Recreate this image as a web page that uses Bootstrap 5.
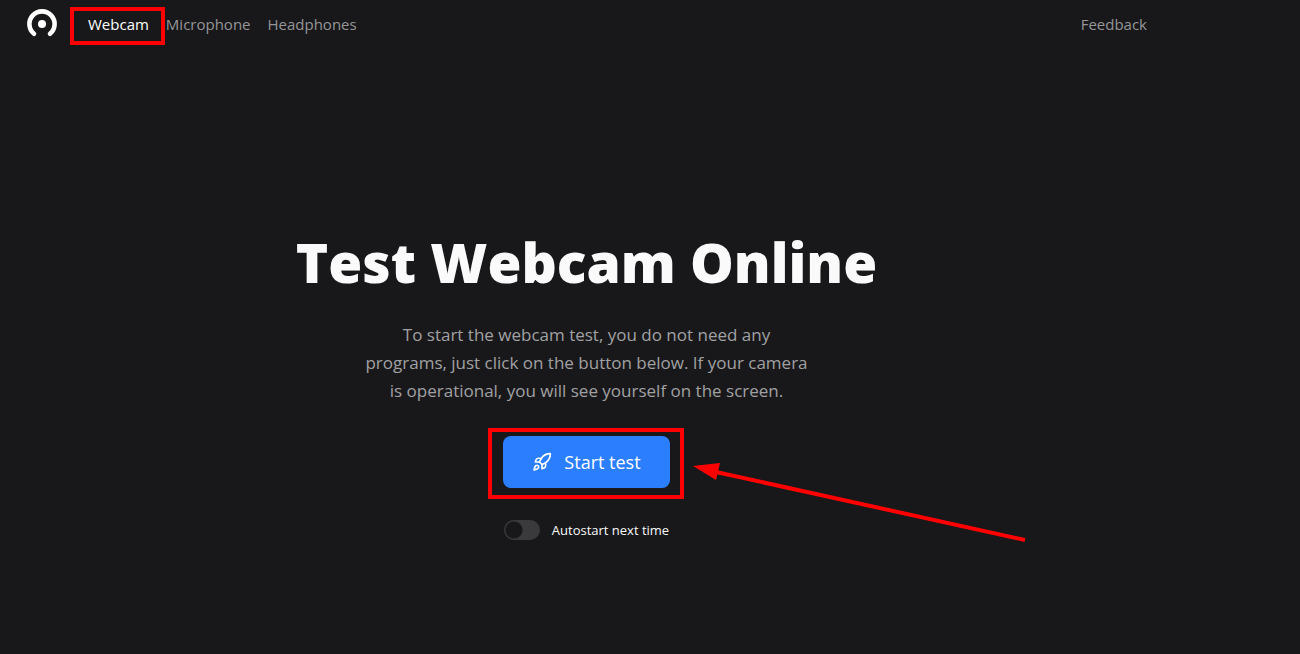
<!DOCTYPE html>
<html lang="en">
<head>
<meta charset="utf-8">
<meta name="viewport" content="width=device-width, initial-scale=1">
<title>Test Webcam Online</title>
<link href="https://cdn.jsdelivr.net/npm/bootstrap@5.3.0/dist/css/bootstrap.min.css" rel="stylesheet">
<style>
  body { background: #18181a; color: #fafafa; font-family: "Open Sans", "Noto Sans", sans-serif; }
  .page { padding-right: 127px; }
  .topbar { height: 48px; padding: 0 26px; }
  .topbar nav { gap: 17px; }
  .topbar a { color: #959597; font-size: 15px; line-height: 24px; text-decoration: none; }
  .topbar a.active, .topbar a:hover { color: #fff; }
  .brand { margin-right: 30px; }
  .marked { position: relative; }
  .marked::after { content: ""; position: absolute; border: 4px solid #f00; pointer-events: none; }
  .nav-mark::after { inset: -5px -16px -9px -18px; }
  .btn-mark::after { inset: -8px -14px -11px -15px; }
  .hero { padding: 184px 16px 64px; }
  .hero h1 { font-size: 55px; line-height: 60px; font-weight: 800; margin-bottom: 29px; }
  .intro { max-width: 448px; font-size: 17px; line-height: 28px; color: #a1a1a3; margin-bottom: 31px; }
  .btn-start { --bs-btn-bg: #2b7fff; --bs-btn-color: #fff; --bs-btn-hover-bg: #4890ff; --bs-btn-hover-color: #fff; --bs-btn-border-color: transparent; height: 52px; padding: 0 28px; font-size: 18px; border-radius: 8px; }
  .arrow { position: absolute; left: 189px; top: 26px; overflow: visible; pointer-events: none; }
  .auto { margin-top: 32px; }
  .auto .form-check-input { width: 36px; height: 20px; margin: 0; border: 0; background-color: #3a3a3c; background-image: radial-gradient(circle at 10px 10px, #18181a 8px, transparent 9px); background-size: 36px 20px; background-position: left center; }
  .auto .form-check-input:checked { background-color: #2b7fff; background-image: radial-gradient(circle at 26px 10px, #fff 8px, transparent 9px); }
  .auto label { font-size: 13px; line-height: 20px; padding-left: 12px; }
</style>
</head>
<body>
<div class="page">
  <header class="topbar d-flex align-items-center">
    <a href="#" class="brand d-flex" aria-label="Home">
      <svg width="32" height="32" viewBox="0 0 32 32" fill="none">
        <path d="M8 25.700A12.600 12.600 0 1 1 24 25.700" stroke="#fff" stroke-width="4.600" stroke-linecap="round"/>
        <circle cx="16" cy="16" r="4" fill="#fff"/>
      </svg>
    </a>
    <nav class="d-flex flex-grow-1">
      <a href="#" class="active marked nav-mark" aria-current="page">Webcam</a>
      <a href="#">Microphone</a>
      <a href="#">Headphones</a>
      <a href="#" class="ms-auto">Feedback</a>
    </nav>
  </header>
  <main class="hero d-flex flex-column align-items-center text-center">
    <h1>Test Webcam Online</h1>
    <p class="intro">To start the webcam test, you do not need any programs, just click on the button below. If your camera is operational, you will see yourself on the screen.</p>
    <div class="marked btn-mark">
      <button type="button" class="btn btn-start d-flex align-items-center gap-2">
        <svg class="me-1" width="20" height="20" viewBox="0 0 24 24" fill="none" stroke="currentColor" stroke-width="2" stroke-linecap="round" stroke-linejoin="round">
          <path d="M4.500 16.500c-1.500 1.260-2 5-2 5s3.740-.500 5-2c.710-.840.700-2.130-.090-2.910a2.180 2.180 0 0 0-2.910-.090z"/>
          <path d="m12 15-3-3a22 22 0 0 1 2-3.950A12.880 12.880 0 0 1 22 2c0 2.720-.780 7.500-6 11a22.350 22.350 0 0 1-4 2z"/>
          <path d="M9 12H4s.550-3.030 2-4c1.620-1.080 5 0 5 0"/>
          <path d="M12 15v5s3.030-.550 4-2c1.080-1.620 0-5 0-5"/>
        </svg>
        Start test
      </button>
      <svg class="arrow" width="334" height="80" viewBox="0 0 334 80" aria-hidden="true">
        <path d="M24 10 333 78" stroke="#f00" stroke-width="4"/>
        <path d="M1 4 28 1 24 18z" fill="#f00"/>
      </svg>
    </div>
    <div class="auto d-flex align-items-center">
      <input class="form-check-input rounded-pill" type="checkbox" role="switch" id="autostart">
      <label for="autostart">Autostart next time</label>
    </div>
  </main>
</div>
<script src="https://cdn.jsdelivr.net/npm/bootstrap@5.3.0/dist/js/bootstrap.bundle.min.js"></script>
</body>
</html>
